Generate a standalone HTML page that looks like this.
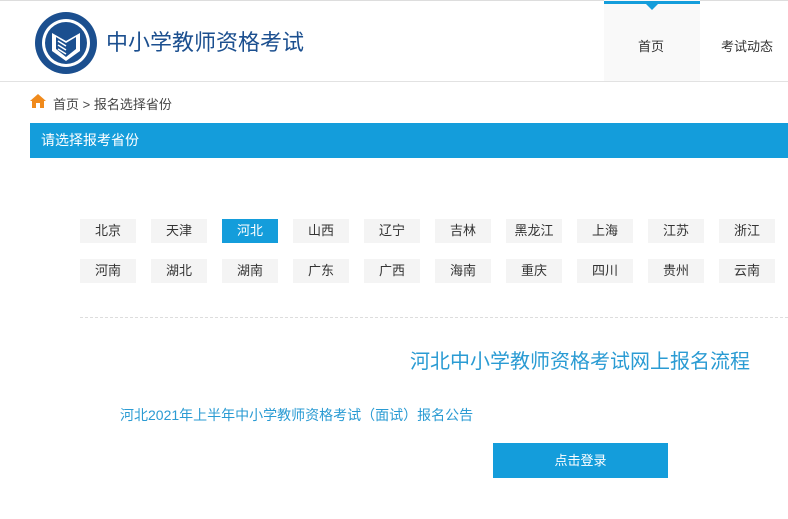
<!DOCTYPE html>
<html><head><meta charset="utf-8"><style>
*{margin:0;padding:0;box-sizing:border-box}
body{width:788px;height:519px;overflow:hidden;background:#fff;font-family:"Liberation Sans","Noto Sans CJK SC",sans-serif;position:relative;color:#333}
.a{position:absolute}
.p{position:absolute;width:56px;height:24px;background:#f4f4f4;font-size:13px;line-height:24px;text-align:center;color:#333}
.p.on{background:#149ddb;color:#fff}
</style></head><body>
<div class="a" style="left:0;top:0;width:788px;height:1px;background:#ddd"></div>
<div class="a" style="left:0;top:81px;width:788px;height:1px;background:#e2e2e2"></div>
<svg class="a" style="left:34px;top:11px" width="64" height="64" viewBox="0 0 64 64">
<circle cx="32" cy="32" r="31" fill="#1b4f8f"/><circle cx="32" cy="32" r="24" fill="#fff"/><circle cx="32" cy="32" r="21" fill="#1b4f8f"/>
<path d="M18 22 L32 30 L46 22 L46 40 L32 50 L18 40Z" fill="#fff"/>
<path d="M22 26 L32 32 L42 26 L42 38 L32 46 L22 38Z" fill="#1b4f8f"/>
<path d="M24 30l8 5 M24 34l8 5 M24 38l8 5" stroke="#fff" stroke-width="1.5"/>
</svg>
<div class="a" style="left:106px;top:28px;font-size:22px;color:#1b4f8f;line-height:30px">中小学教师资格考试</div>
<div class="a" style="left:604px;top:0;width:96px;height:81px;background:#f9f9f9"></div>
<div class="a" style="left:604px;top:1px;width:96px;height:3px;background:#149ddb"></div>
<div class="a" style="left:646px;top:4px;width:0;height:0;border-left:6px solid transparent;border-right:6px solid transparent;border-top:6px solid #149ddb"></div>
<div class="a" style="left:638px;top:36px;font-size:13px">首页</div>
<div class="a" style="left:721px;top:36px;font-size:13px">考试动态</div>
<svg class="a" style="left:30px;top:94px" width="16" height="14" viewBox="0 0 16 14"><path d="M8 0L0 7h2v7h4V9h4v5h4V7h2z" fill="#f08a1c"/></svg>
<div class="a" style="left:53px;top:94px;font-size:13px;color:#444">首页 &gt; 报名选择省份</div>
<div class="a" style="left:30px;top:123px;width:758px;height:35px;background:#149ddb;color:#fff;font-size:14px;line-height:35px;padding-left:11px">请选择报考省份</div>
<div class="p" style="left:80px;top:219px">北京</div><div class="p" style="left:151px;top:219px">天津</div><div class="p on" style="left:222px;top:219px">河北</div><div class="p" style="left:293px;top:219px">山西</div><div class="p" style="left:364px;top:219px">辽宁</div><div class="p" style="left:435px;top:219px">吉林</div><div class="p" style="left:506px;top:219px">黑龙江</div><div class="p" style="left:577px;top:219px">上海</div><div class="p" style="left:648px;top:219px">江苏</div><div class="p" style="left:719px;top:219px">浙江</div>
<div class="p" style="left:80px;top:259px">河南</div><div class="p" style="left:151px;top:259px">湖北</div><div class="p" style="left:222px;top:259px">湖南</div><div class="p" style="left:293px;top:259px">广东</div><div class="p" style="left:364px;top:259px">广西</div><div class="p" style="left:435px;top:259px">海南</div><div class="p" style="left:506px;top:259px">重庆</div><div class="p" style="left:577px;top:259px">四川</div><div class="p" style="left:648px;top:259px">贵州</div><div class="p" style="left:719px;top:259px">云南</div>
<div class="a" style="left:80px;top:317px;width:708px;border-top:1px dashed #ddd"></div>
<div class="a" style="left:410px;top:348px;font-size:20px;color:#2a9bd3;line-height:28px">河北中小学教师资格考试网上报名流程</div>
<div class="a" style="left:120px;top:405px;font-size:14px;color:#2a9bd3">河北2021年上半年中小学教师资格考试（面试）报名公告</div>
<div class="a" style="left:493px;top:443px;width:175px;height:35px;background:#149ddb;color:#fff;font-size:13px;line-height:35px;text-align:center">点击登录</div>
</body></html>
